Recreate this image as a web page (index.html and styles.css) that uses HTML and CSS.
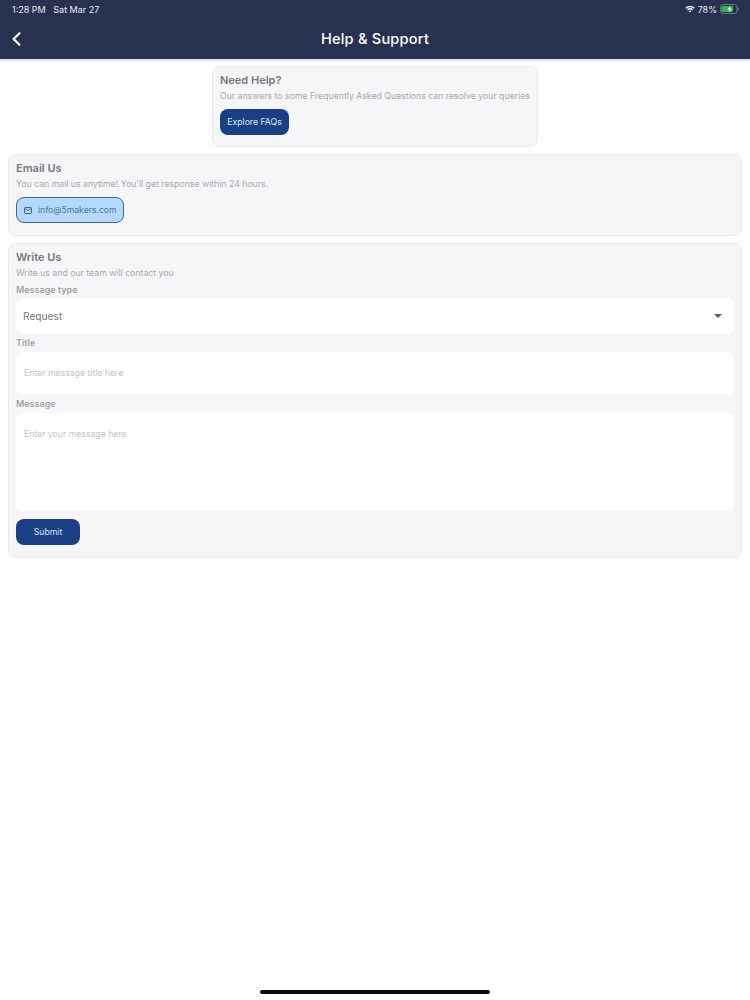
FILE: index.html
```html
<!DOCTYPE html>
<html lang="en">
<head>
<meta charset="utf-8">
<title>Help &amp; Support</title>
<link rel="stylesheet" href="styles.css">
</head>
<body>
<div class="page">
  <header class="header">
    <div class="status">
      <span>1:28 PM&nbsp;&nbsp; Sat Mar 27</span>
      <div class="status-right">
        <svg class="wifi" width="10" height="8" viewBox="0 0 12 9"><path d="M0.4 3 A8 8 0 0 1 11.6 3 L10.4 4.2 A6.3 6.3 0 0 0 1.6 4.2Z M2.4 5 A5.2 5.2 0 0 1 9.6 5 L8.4 6.2 A3.5 3.5 0 0 0 3.6 6.2Z M4.4 7 A2.3 2.3 0 0 1 7.6 7 L6 8.7Z" fill="#fff"/></svg>
        <span>78%</span>
        <svg class="battery" width="19" height="10" viewBox="0 0 19 10"><rect x="0.5" y="0.5" width="16.5" height="9" rx="2.5" fill="none" stroke="#6f778d"/><rect x="1.5" y="2" width="11.5" height="6" rx="1" fill="#35b558"/><rect x="17.6" y="3.5" width="1.2" height="3" rx="0.6" fill="#6f778d"/><path d="M10.5 1.5 L7.5 5.5 H9.5 L8.8 8.5 L12 4.5 H10 Z" fill="#fff"/></svg>
      </div>
    </div>
    <div class="nav">
      <svg class="back" width="12" height="18" viewBox="0 0 12 18"><path d="M9.5 3.2 L3.5 9 L9.5 14.8" fill="none" stroke="#fff" stroke-width="2.2" stroke-linecap="round" stroke-linejoin="round"/></svg>
      <h1 class="nav-title">Help &amp; Support</h1>
    </div>
  </header>

  <main class="content">
    <section class="card card-help">
      <h2 class="card-title">Need Help?</h2>
      <p class="card-text">Our answers to some Frequently Asked Questions can resolve your queries</p>
      <button class="btn btn-faq">Explore FAQs</button>
    </section>

    <section class="card card-email">
      <h2 class="card-title">Email Us</h2>
      <p class="card-text">You can mail us anytime! You'll get response within 24 hours.</p>
      <div class="email-chip">
        <svg width="8" height="7" viewBox="0 0 9 8"><rect x="0.6" y="0.6" width="7.8" height="6.8" rx="0.8" fill="none" stroke="#2f5d8e" stroke-width="1.1"/><path d="M1 1.6 L4.5 4.1 L8 1.6" fill="none" stroke="#2f5d8e" stroke-width="1"/></svg>
        <span>info@5makers.com</span>
      </div>
    </section>

    <section class="card card-write">
      <h2 class="card-title">Write Us</h2>
      <p class="card-text">Write us and our team will contact you</p>
      <label class="field-label label-type">Message type</label>
      <div class="select">
        <span>Request</span>
        <span class="caret"></span>
      </div>
      <label class="field-label label-title">Title</label>
      <div class="input input-title">Enter message title here</div>
      <label class="field-label label-message">Message</label>
      <div class="input input-message">Enter your message here</div>
      <button class="btn btn-submit">Submit</button>
    </section>
  </main>

  <div class="home-indicator"></div>
</div>
</body>
</html>
```
FILE: styles.css
```css
* { box-sizing: border-box; }
html, body { margin: 0; padding: 0; }
body {
  width: 750px;
  height: 1000px;
  overflow: hidden;
  background: #fff;
  font-family: Inter, "Liberation Sans", sans-serif;
}
.page {
  position: relative;
  width: 750px;
  height: 1000px;
  display: flex;
  flex-direction: column;
}
.header {
  height: 59px;
  background: #283150;
  color: #fff;
  box-shadow: 0 1px 3px rgba(40, 49, 80, 0.25);
  flex: none;
}
.status {
  height: 18px;
  padding: 0 11px 0 12px;
  display: flex;
  align-items: center;
  justify-content: space-between;
  font-size: 9px;
  color: #e8eaf0;
}
.status-right {
  display: flex;
  align-items: center;
  gap: 3px;
}
.nav {
  position: relative;
  height: 41px;
  display: flex;
  align-items: center;
  justify-content: center;
}
.back {
  position: absolute;
  left: 10px;
  top: 12px;
}
.nav-title {
  margin: 0;
  font-size: 14.6px;
  font-weight: 500;
  letter-spacing: 0.2px;
}
.content {
  padding: 7px 8px 0;
  display: flex;
  flex-direction: column;
  gap: 7px;
}
.card {
  background: #f6f5f7;
  border: 1px solid #e9e9ec;
  border-radius: 8px;
  padding: 6px 7px 0;
  width: 100%;
}
.card-help {
  width: 326px;
  height: 81px;
  align-self: center;
}
.card-email { height: 82px; }
.card-write { height: 315px; }
.card-title {
  margin: 0;
  font-size: 11px;
  line-height: 14px;
  font-weight: 600;
  color: #77777b;
}
.card-text {
  margin: 3px 0 0;
  font-size: 8.72px;
  line-height: 12px;
  color: #a9a9ae;
  white-space: nowrap;
}
.btn {
  display: flex;
  align-items: center;
  justify-content: center;
  border: none;
  border-radius: 8px;
  background: #1b3f84;
  color: #d8e6fb;
  font-family: inherit;
  font-size: 8.7px;
  padding: 0;
}
.btn-faq {
  width: 69px;
  height: 26px;
  margin-top: 7px;
}
.email-chip {
  width: 108px;
  height: 26px;
  margin-top: 7px;
  display: flex;
  align-items: center;
  gap: 6px;
  padding-left: 7px;
  background: #b5d9fa;
  border: 1px solid #3b6894;
  border-radius: 8px;
  font-size: 8.6px;
  color: #4c769d;
}
.field-label {
  display: block;
  font-size: 9px;
  line-height: 12px;
  font-weight: 600;
  color: #a3a3a8;
}
.label-type { margin-top: 5px; }
.label-title { margin-top: 3px; }
.label-message { margin-top: 4px; }
.select, .input {
  background: #fff;
  border-radius: 6px;
}
.select {
  height: 36px;
  margin-top: 2px;
  padding: 0 12px 0 7px;
  display: flex;
  align-items: center;
  justify-content: space-between;
  font-size: 10.2px;
  color: #76767a;
}
.caret {
  width: 0;
  height: 0;
  border-left: 4px solid transparent;
  border-right: 4px solid transparent;
  border-top: 4px solid #606064;
}
.input {
  margin-top: 3px;
  padding-left: 8px;
  font-size: 8.7px;
  color: #c3c3c7;
}
.input-title {
  height: 42px;
  line-height: 43px;
}
.input-message {
  height: 98px;
  padding-top: 15px;
  line-height: 12px;
}
.btn-submit {
  width: 64px;
  height: 26px;
  margin-top: 8px;
}
.home-indicator {
  position: absolute;
  left: 260px;
  top: 990px;
  width: 230px;
  height: 4px;
  border-radius: 2px;
  background: #0b0b0c;
}
```
